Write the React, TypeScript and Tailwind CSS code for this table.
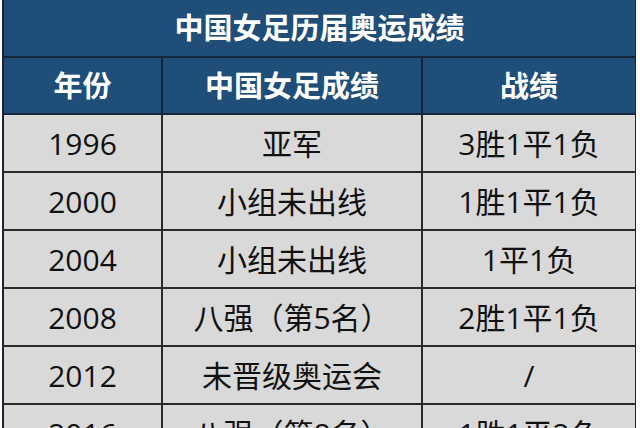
const rows = [
  { year: '1996', result: '亚军', record: '3胜1平1负' },
  { year: '2000', result: '小组未出线', record: '1胜1平1负' },
  { year: '2004', result: '小组未出线', record: '1平1负' },
  { year: '2008', result: '八强（第5名）', record: '2胜1平1负' },
  { year: '2012', result: '未晋级奥运会', record: '/' },
  { year: '2016', result: '八强（第8名）', record: '1胜1平2负' },
];

const font = { fontFamily: '"Open Sans", "Noto Sans CJK SC", sans-serif' };

export default function App() {
  return (
    <div className="w-[640px] h-[428px] overflow-hidden bg-white pl-[2px]" style={font}>
      <div className="w-[634px] border-l-2 border-r border-[#1b2430]">
        {/* title */}
        <div className="h-[58px] bg-[#1f4e79] border-b-2 border-[#13263a] flex items-center justify-center text-white font-bold text-[29px]">
          中国女足历届奥运成绩
        </div>
        {/* header */}
        <div className="grid grid-cols-[159px_260px_1fr] h-[57px] bg-[#1f4e79] text-white font-bold text-[29px] border-b-2 border-[#13263a]">
          <div className="flex items-center justify-center border-r-2 border-[#13263a]">年份</div>
          <div className="flex items-center justify-center border-r-2 border-[#13263a]">中国女足成绩</div>
          <div className="flex items-center justify-center">战绩</div>
        </div>
        {rows.map((r) => (
          <div
            key={r.year}
            className="grid grid-cols-[159px_260px_1fr] h-[58px] bg-[#d9d9d9] text-[#111] text-[30px] border-b-2 border-[#2a2a2a]"
          >
            <div className="flex items-center justify-center border-r-2 border-[#2a2a2a]">{r.year}</div>
            <div className="flex items-center justify-center border-r-2 border-[#2a2a2a]">{r.result}</div>
            <div className="flex items-center justify-center">{r.record}</div>
          </div>
        ))}
      </div>
    </div>
  );
}
